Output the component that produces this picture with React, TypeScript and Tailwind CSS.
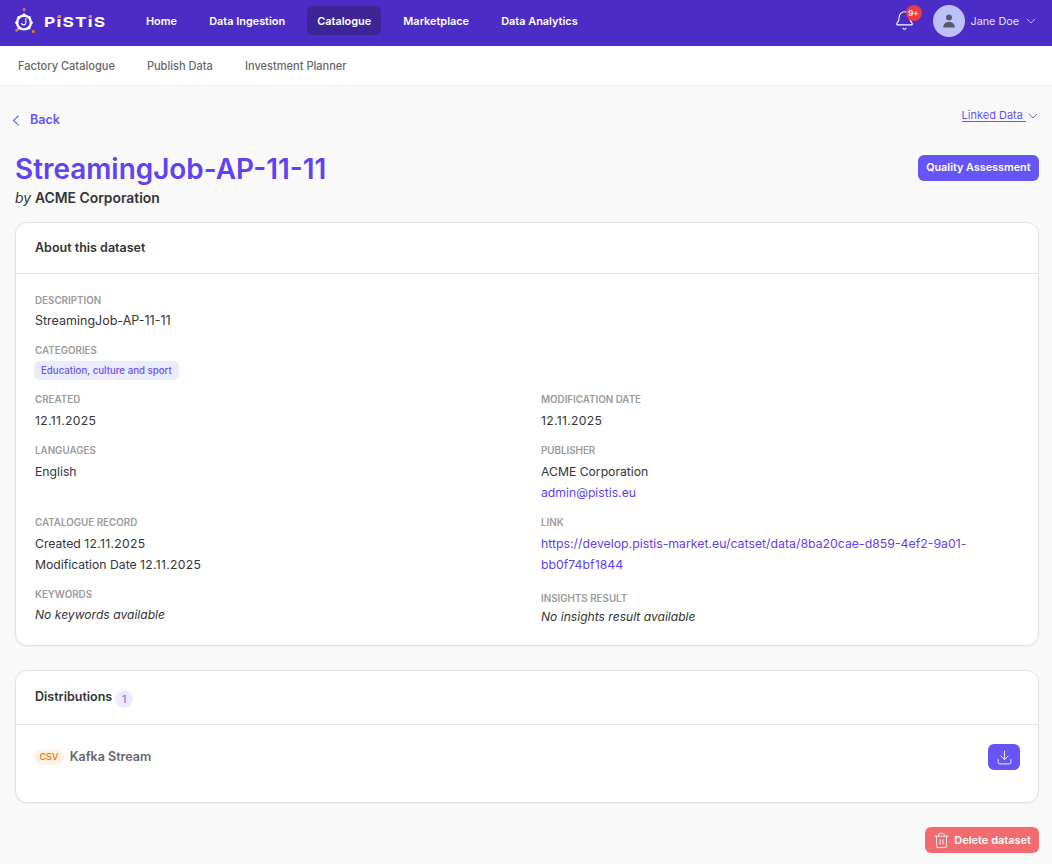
import { Bell, Download, Trash2 } from "lucide-react";

const navItems = ["Home", "Data Ingestion", "Catalogue", "Marketplace", "Data Analytics"];
const subItems = ["Factory Catalogue", "Publish Data", "Investment Planner"];

function Chevron({ className = "" }: { className?: string }) {
  return (
    <svg width="10" height="6" viewBox="0 0 10 6" fill="none" stroke="currentColor" strokeWidth="1" className={className}>
      <path d="M1 .8 5 5l4-4.2" />
    </svg>
  );
}

function Logo() {
  return (
    <div className="mt-[3px] flex items-center gap-[9px]">
      <svg width="20" height="26" viewBox="0 0 20 26" fill="none" className="-mt-[2px]">
        <rect x="7.8" y="0.2" width="2.6" height="2.6" fill="#f47b20" />
        <rect x="0.4" y="21" width="2.6" height="2.6" fill="#f47b20" />
        <rect x="17" y="22.2" width="2.6" height="2.6" fill="#f47b20" />
        <circle cx="9" cy="14.5" r="6.9" stroke="white" strokeWidth="2.4" />
        <circle cx="9" cy="6.8" r="1.6" fill="white" />
        <circle cx="1.6" cy="14.5" r="1.5" fill="white" />
        <circle cx="16.4" cy="14.5" r="1.5" fill="white" />
        <circle cx="4" cy="20" r="1.5" fill="white" />
        <circle cx="14" cy="20" r="1.5" fill="white" />
        <circle cx="3.6" cy="9.4" r="1.3" fill="white" />
        <circle cx="14.4" cy="9.4" r="1.3" fill="white" />
        <path d="M10.8 10.6v4.2a2.2 2.2 0 0 1-4.2.8" stroke="white" strokeWidth="1.2" strokeLinecap="round" />
      </svg>
      <span className="relative block h-[14px] w-[62px] leading-none">
        <span className="absolute left-0 top-[1px] origin-left scale-x-[1.26] whitespace-nowrap text-[13.8px] font-bold tracking-[0.07em] text-white">
          PiSTiS
        </span>
        <span className="absolute left-[14px] top-0 h-[3px] w-[3px] bg-[#f47b20]" />
        <span className="absolute left-[45px] top-0 h-[3px] w-[3px] bg-[#f47b20]" />
      </span>
    </div>
  );
}

function Label({ children }: { children: React.ReactNode }) {
  return <div className="text-[9.8px] font-semibold uppercase leading-[14px] text-[#9b9b9b]">{children}</div>;
}

function Field({ label, children, className = "" }: { label: string; children: React.ReactNode; className?: string }) {
  return (
    <div className={className}>
      <Label>{label}</Label>
      <div className="mt-[3px] text-[12.2px] leading-[21px] text-[#333438]">{children}</div>
    </div>
  );
}

function DateText({ children }: { children: React.ReactNode }) {
  return <span className="tracking-[0.3px]">{children}</span>;
}

export default function App() {
  return (
    <div className="min-h-[864px] bg-[#f9f9f9] font-['Inter',sans-serif]">
      <header className="flex h-[46px] items-center bg-[#4b2cc6] pb-[5px] pl-[15px] pr-[16px]">
        <Logo />
        <nav className="ml-[30px] flex items-center gap-[12.2px]">
          {navItems.map((item) => (
            <a
              key={item}
              className={`rounded-md px-[10px] pb-[6px] pt-[8px] text-[10.9px] font-semibold leading-[15px] text-white ${item === "Catalogue" ? "bg-[#3d2595]" : ""}`}
            >
              {item}
            </a>
          ))}
        </nav>
        <div className="ml-auto flex items-center">
          <div className="relative mr-[18px]">
            <Bell className="h-[21px] w-[21px] text-white" strokeWidth={1.2} />
            <span className="absolute -right-[7px] -top-[5px] flex h-4 w-4 items-center justify-center rounded-full bg-[#ef3a45] text-[8px] font-semibold text-white">
              9+
            </span>
          </div>
          <div className="flex h-8 w-8 items-center justify-center rounded-full bg-[#bcc0fb]">
            <svg width="14" height="14" viewBox="0 0 14 14" fill="#5b5b66">
              <circle cx="7" cy="3.4" r="3" />
              <path d="M1.2 13.6c0-3.6 2.2-5.6 5.8-5.6s5.8 2 5.8 5.6z" />
            </svg>
          </div>
          <span className="ml-[6px] mt-[3px] text-[10.8px] text-[#e6e1fa]">Jane Doe</span>
          <Chevron className="ml-[7px] text-[#bdb3ee]" />
        </div>
      </header>

      <div className="flex h-[40px] items-center gap-8 border-b border-[#efefef] bg-white px-[18px] pt-[1px] text-[11.05px] font-medium text-[#65676d]">
        {subItems.map((item) => (
          <a key={item}>{item}</a>
        ))}
      </div>

      <main className="pl-[15px] pr-[13px]">
        <div className="flex items-center justify-between pr-[1px] pt-[24px]">
          <a className="-ml-[3px] flex items-center text-[12.6px] font-semibold leading-[20px] text-[#6655f6]">
            <svg width="8" height="11" viewBox="0 0 8 11" fill="none" stroke="currentColor" strokeWidth="1.1" className="mr-[10px]">
              <path d="M6.5 .8 1.5 5.5l5 4.7" />
            </svg>
            Back
          </a>
          <a className="-mt-[9px] flex items-center text-[11px] text-[#6655f6]">
            <span className="underline underline-offset-2">Linked Data&nbsp;</span>
            <Chevron className="ml-[2px]" />
          </a>
        </div>

        <div className="mt-[22px] flex items-start justify-between">
          <div>
            <h1 className="text-[27.9px] font-semibold leading-[34px] text-[#6042ee]">StreamingJob-AP-11-11</h1>
            <p className="mt-[2px] text-[13.9px] leading-[20px] text-[#333438]">
              <em>by</em> <span className="font-semibold">ACME Corporation</span>
            </p>
          </div>
          <button className="mt-[3px] h-[26px] rounded-md bg-[#6655f6] px-[8.5px] pt-[1px] text-[10.8px] font-semibold text-white">
            Quality Assessment
          </button>
        </div>

        <section className="mt-[14px] rounded-xl border border-[#e2e2e2] bg-white shadow-[0_1px_2px_rgba(0,0,0,0.05)]">
          <h2 className="flex h-[51px] items-center border-b border-[#e2e2e2] px-[19px] text-[12.5px] font-semibold text-[#333438]">
            About this dataset
          </h2>
          <div className="px-[19px] pb-[18px] pt-[20px]">
            <div>
              <Label>Description</Label>
              <div className="mt-[2px] text-[12.5px] leading-[21px] text-[#333438]">StreamingJob-AP-11-11</div>
            </div>
            <div className="mt-[13px]">
              <Label>Categories</Label>
              <span className="-ml-[1px] mt-[3px] block w-fit rounded-md bg-[#eaebfd] px-[7px] py-[2px] text-[9.7px] font-medium leading-[15px] text-[#6655f6]">
                Education, culture and sport
              </span>
            </div>
            <div className="mt-[13px] grid grid-cols-2 gap-x-[28px]">
              <Field label="Created">
                <DateText>12.11.2025</DateText>
              </Field>
              <Field label="Modification Date">
                <DateText>12.11.2025</DateText>
              </Field>
              <Field label="Languages" className="mt-[13px]">English</Field>
              <Field label="Publisher" className="mt-[13px]">
                ACME Corporation
                <a className="block text-[#6042ee]">admin@pistis.eu</a>
              </Field>
              <Field label="Catalogue Record" className="mt-[13px]">
                Created <DateText>12.11.2025</DateText>
                <br />
                Modification Date <DateText>12.11.2025</DateText>
              </Field>
              <Field label="Link" className="mt-[13px]">
                <a className="block text-[12.3px] text-[#6042ee]">
                  https://develop.pistis-market.eu/catset/data/8ba20cae-d859-4ef2-9a01-bb0f74bf1844
                </a>
              </Field>
              <div className="mt-[13px]">
                <Label>Keywords</Label>
                <div className="mt-[2px] text-[12.1px] italic leading-[21px] text-[#333438]">No keywords available</div>
              </div>
              <div className="mt-[17px]">
                <Label>Insights Result</Label>
                <div className="mt-0 text-[12.1px] italic leading-[21px] text-[#333438]">No insights result available</div>
              </div>
            </div>
          </div>
        </section>

        <section className="mt-[24px] rounded-xl border border-[#e2e2e2] bg-white shadow-[0_1px_2px_rgba(0,0,0,0.05)]">
          <div className="flex h-[54px] items-center gap-[3px] border-b border-[#e2e2e2] px-[19px]">
            <h2 className="text-[12.5px] font-semibold text-[#333438]">Distributions</h2>
            <span className="mt-[3px] flex h-[18px] w-[18px] items-center justify-center rounded-full bg-[#eaebfd] text-[10px] text-[#6655f6]">
              1
            </span>
          </div>
          <div className="flex h-[77px] items-start justify-between pl-[19px] pr-[18px] pt-[19px]">
            <div className="mt-[4px] flex items-center gap-[6px]">
              <span className="-ml-[1px] flex h-4 items-center rounded-full bg-[#fff3e6] px-[5.5px] pb-[1px] text-[9px] font-medium text-[#f66a0e]">
                CSV
              </span>
              <span className="text-[12.5px] font-semibold text-[#65676d]">Kafka Stream</span>
            </div>
            <button className="flex h-[26px] w-8 items-center justify-center rounded-md bg-[#6655f6]">
              <Download className="h-[17px] w-[17px] text-white" strokeWidth={1.3} />
            </button>
          </div>
        </section>

        <div className="mt-[24px] flex justify-end">
          <button className="flex h-[26px] items-center gap-[4px] rounded-md bg-[#f26b6f] pl-[8px] pr-[8px] text-[11px] font-semibold text-white">
            <Trash2 className="h-[17px] w-[17px]" strokeWidth={1.2} />
            Delete dataset
          </button>
        </div>
      </main>
    </div>
  );
}
